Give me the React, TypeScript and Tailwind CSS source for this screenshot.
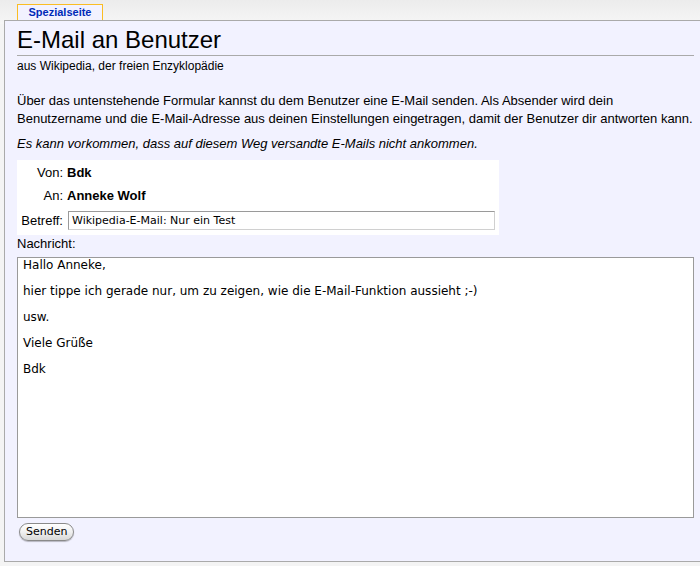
import React from "react";

const sans = { fontFamily: '"Liberation Sans", Arial, sans-serif' };
const mono = { fontFamily: '"DejaVu Sans", sans-serif' };

export default function App() {
  return (
    <div
      className="relative h-[566px] w-[700px] overflow-hidden bg-[#f4f4f4] text-black"
      style={sans}
    >
      {/* soft wave backdrop */}
      <div className="absolute inset-x-0 top-0 h-[24px] bg-gradient-to-b from-[#ececec] to-[#f6f6f6]" />

      <div className="relative pl-[4px] pt-[4px]">
        <div className="ml-[13px] flex h-[16px] w-[86px] items-start justify-center border border-b-0 border-[#fabd23] bg-[#f2f2ff] text-[11px] leading-[14px] font-bold text-[#002bb8]">
          Spezialseite
        </div>
        <div className="h-[542px] border border-r-0 border-[#aaaaaa] bg-[#f2f2ff] pl-[12px] pr-[6px] pt-[5px]">
          <h1 className="border-b border-[#aaaaaa] pb-[1px] text-[24px] leading-[28px]">
            E-Mail an Benutzer
          </h1>
          <div className="mt-[3px] text-[12px] leading-[14px]">
            aus Wikipedia, der freien Enzyklopädie
          </div>

          <p className="mt-[19px] text-[13px] leading-[18px]">
            Über das untenstehende Formular kannst du dem Benutzer eine E-Mail senden. Als Absender wird dein
            Benutzername und die E-Mail-Adresse aus deinen Einstellungen eingetragen, damit der Benutzer dir
            antworten kann.
          </p>
          <p className="mt-[7px] text-[13px] leading-[18px] italic">
            Es kann vorkommen, dass auf diesem Weg versandte E-Mails nicht ankommen.
          </p>

          <div className="mt-[7px] w-[482px] bg-white pb-[1px] pl-[2px] pt-[1px] text-[13px] leading-[18px]">
            <div className="flex h-[23px] items-center">
              <span className="w-[44px] text-right">Von:</span>
              <span className="ml-[4px] font-bold">Bdk</span>
            </div>
            <div className="flex h-[23px] items-center">
              <span className="w-[44px] text-right">An:</span>
              <span className="ml-[4px] font-bold">Anneke Wolf</span>
            </div>
            <div className="flex h-[27px] items-center">
              <span className="w-[44px] text-right">Betreff:</span>
              <input
                className="ml-[5px] h-[19px] w-[427px] border border-[#9a9a9a] border-b-[#d0d0d0] border-r-[#d0d0d0] bg-white px-[3px] text-[11px] outline-none"
                style={mono}
                defaultValue="Wikipedia-E-Mail: Nur ein Test"
              />
            </div>
          </div>

          <div className="text-[13px] leading-[18px]">Nachricht:</div>
          <div
            className="mt-[4px] h-[261px] w-[677px] border border-[#9a9a9a] bg-white px-[5px] text-[12px] leading-[14px]"
            style={mono}
          >
            <div className="flex flex-col gap-[12px]">
              <span>Hallo Anneke,</span>
              <span>hier tippe ich gerade nur, um zu zeigen, wie die E-Mail-Funktion aussieht ;-)</span>
              <span>usw.</span>
              <span>Viele Grüße</span>
              <span>Bdk</span>
            </div>
          </div>

          <button
            className="ml-[2px] mt-[4px] h-[18px] rounded-full border border-[#8a8a8a] bg-gradient-to-b from-white via-[#f0f0f0] to-[#d8d8d8] px-[6px] text-[11px] leading-[16px] shadow-[0_1px_1px_rgba(0,0,0,0.25)]"
            style={mono}
          >
            Senden
          </button>
        </div>
      </div>
    </div>
  );
}
